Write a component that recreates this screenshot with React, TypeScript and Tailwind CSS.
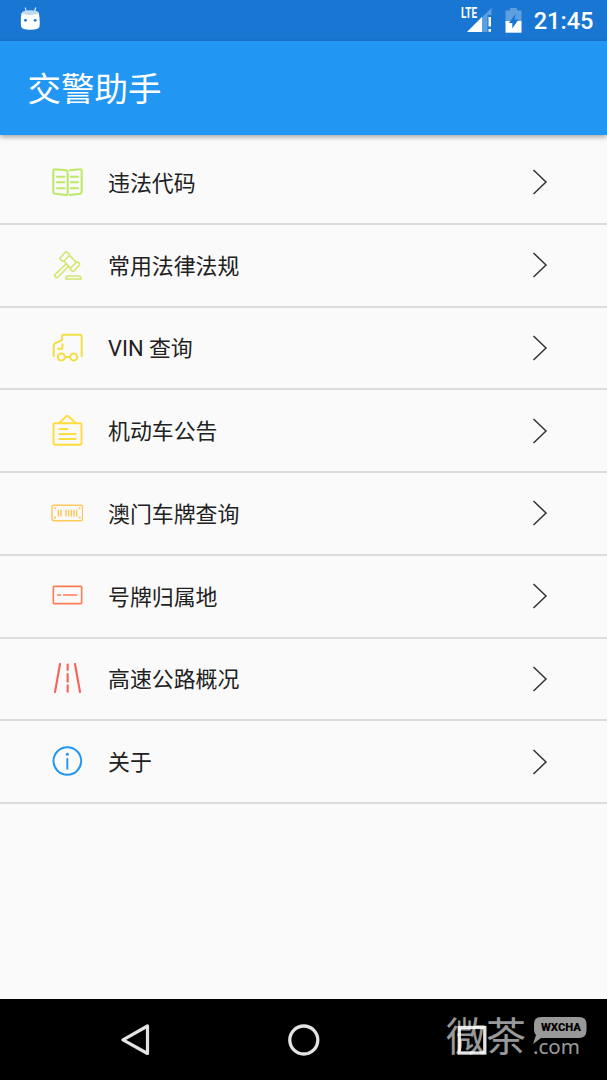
import type { ReactNode } from 'react';

type MenuItem = {
    label: string;
    color: string;
    viewBox: string;
    strokeWidth: number;
    icon: ReactNode;
};

const menuItems: MenuItem[] = [
    {
        label: '违法代码',
        color: 'text-[#bde968]',
        viewBox: '33 33 96 96',
        strokeWidth: 6.2,
        icon: (
            <>
                <path d="M45 43L77 46Q83 47 83 52V115Q83 121 77 120L46 116Q40 115 40 110V48Q40 43 45 43Z" />
                <path d="M90 46L119 43Q125 42 125 48V110Q125 115 120 116L90 120" />
                <path d="M51 65H73M51 82H73M51 100H73M92 65H114M92 82H114M92 100H114" />
            </>
        ),
    },
    {
        label: '常用法律法规',
        color: 'text-[#d5e56b]',
        viewBox: '33 41 96 96',
        strokeWidth: 4.6,
        icon: (
            <>
                <path d="M61 67L76 51Q79 48 82 51L87 56Q90 59 87 62L72 77Q69 79 66 76L61 72Q58 70 61 67Z" />
                <path d="M89 61L108 80M72 78L91 98" />
                <path d="M92 98L109 81Q112 78 115 81L118 84Q120 87 118 90L102 107Q99 110 96 107L92 103Q89 101 92 98Z" />
                <path d="M78 86L45 118Q42 121 45 124L48 126Q51 128 54 125L85 94" />
                <path d="M77 131Q76 122 85 122H115Q123 122 123 131Z" />
            </>
        ),
    },
    {
        label: 'VIN 查询',
        color: 'text-[#f1df45]',
        viewBox: '33 36 96 96',
        strokeWidth: 6,
        icon: (
            <>
                <path d="M41 109V78Q41 73 45 70L66 60V49Q66 44 71 44H119Q125 44 125 50V109" />
                <path d="M67 73V86H54M75 111H90" />
                <circle cx="64" cy="111" r="10.5" />
                <circle cx="101" cy="111" r="10.5" />
            </>
        ),
    },
    {
        label: '机动车公告',
        color: 'text-[#ffdc3e]',
        viewBox: '33 44 96 96',
        strokeWidth: 5.8,
        icon: (
            <>
                <rect x="40.500" y="69" width="84" height="64" rx="4" />
                <path d="M58 68L82 45L107 68M58 86H82M58 101H107M58 116H107" />
            </>
        ),
    },
    {
        label: '澳门车牌查询',
        color: 'text-[#ffc75b]',
        viewBox: '33 36 96 96',
        strokeWidth: 4.4,
        icon: (
            <>
                <rect x="36" y="61" width="92" height="46" rx="6" />
                <path d="M55 76V93M63 76V93M78 76V93M86 76V93M94 76V93M102 76V93M110 76V93" />
                <path d="M45 70V70.100M119 70V70.100M45 98V98.100M119 98V98.100" strokeWidth="6.500" />
            </>
        ),
    },
    {
        label: '号牌归属地',
        color: 'text-[#ff7b54]',
        viewBox: '33 45 96 96',
        strokeWidth: 4.8,
        icon: (
            <>
                <rect x="40" y="64" width="85" height="52" rx="3" />
                <path d="M53 90H61M71 90H110" />
            </>
        ),
    },
    {
        label: '高速公路概况',
        color: 'text-[#f9635a]',
        viewBox: '33 39 96 96',
        strokeWidth: 6.4,
        icon: <path d="M60 42L45 126M105 42L120 126M83 44V60M83 72V95M83 106V125" />,
    },
    {
        label: '关于',
        color: 'text-[#2196f3]',
        viewBox: '33 33 96 96',
        strokeWidth: 5.8,
        icon: (
            <>
                <circle cx="82" cy="78" r="41.500" />
                <path d="M82 72V101" />
                <path d="M82 58V58.100" strokeWidth="9" />
            </>
        ),
    },
];

const StatusBar = () => (
    <div className="flex h-[40.5px] shrink-0 items-start bg-[#1976d2] text-white">
        <svg className="ml-5 mt-1.5 h-6 w-5" viewBox="0 0 20 24" fill="none">
            <path d="M5.300 1.500L6.200 6M15.700 1.500L14.500 6" stroke="#e3effa" strokeWidth="1.200" />
            <path d="M1.500 7H18.800Q20.200 14 19.500 20.500Q19 23.800 10.400 23.800Q1.700 23.800 1.200 20.500Q.3 14 1.500 7Z" fill="#fff" />
            <ellipse cx="10.300" cy="6.600" rx="8.500" ry="2.300" fill="#bfdaf5" />
            <circle cx="5.500" cy="14.300" r="1.400" fill="#1976d2" />
            <circle cx="15.200" cy="14.300" r="1.400" fill="#1976d2" />
        </svg>
        <div className="relative ml-auto mt-1.5 h-[27px] w-[31px]">
            <svg className="h-[27px] w-[31px]" viewBox="0 0 31 27">
                <path d="M30.500 2V9H26.500V26H6Z" fill="#5f9fe0" />
                <path d="M21 11V26H6Z" fill="#fff" />
                <path d="M27.500 11H30V20.500H27.500ZM27.500 23H30V25.700H27.500Z" fill="#fff" />
            </svg>
            <span className="absolute left-0 top-[1px] origin-left scale-x-[0.69] text-[14.5px] font-bold leading-[14px]">LTE</span>
        </div>
        <svg className="ml-[13px] mt-2 h-[25px] w-[17px]" viewBox="0 0 17 25">
            <path d="M5 0H12V2.500H16.500V14H.5V2.500H5Z" fill="#5f9fe0" />
            <path d="M.5 13H16.500V24.700H.5Z" fill="#fff" />
            <path d="M10.800 5.500L3.800 15H7.300V20.500L13.500 11.500H9.500Z" fill="#1976d2" />
        </svg>
        <span className="ml-[11.500px] mr-[13.5px] mt-[7px] text-[23.6px] font-medium leading-[28px]">21:45</span>
    </div>
);

const MenuRow = ({ item }: { item: MenuItem }) => (
    <li className="flex h-[82.75px] items-center border-b-2 border-[#dcdcdc] pl-[51px] pr-[59px]">
        <svg
            className={`h-8 w-8 shrink-0 ${item.color}`}
            viewBox={item.viewBox}
            fill="none"
            stroke="currentColor"
            strokeWidth={item.strokeWidth}
            strokeLinecap="round"
            strokeLinejoin="round"
        >
            {item.icon}
        </svg>
        <span className="ml-[25px] pt-[3px] text-[21.9px] leading-8 text-[#212121]">{item.label}</span>
        <svg className="ml-auto h-[26px] w-4" viewBox="0 0 16 26" fill="none" stroke="#333" strokeWidth="1.500">
            <path d="M1.500 1L14 13L1.500 25" />
        </svg>
    </li>
);

const NavigationBar = () => (
    <div className="relative flex h-[81px] shrink-0 items-center justify-between bg-black pl-[119px] pr-[119px]">
        <svg className="h-8 w-8" viewBox="0 0 32 32" fill="none" stroke="#e4e4e4" strokeWidth="3.200" strokeLinejoin="round">
            <path d="M28.500 2V29.500L4 15.800Z" />
        </svg>
        <svg className="h-8 w-8" viewBox="0 0 32 32" fill="none" stroke="#e4e4e4" strokeWidth="3.300">
            <circle cx="15.800" cy="16" r="14" />
        </svg>
        <svg className="h-8 w-8" viewBox="0 0 32 32" fill="none" stroke="#e4e4e4" strokeWidth="3.300">
            <rect x="3.300" y="3.500" width="25.500" height="25.500" />
        </svg>
        <div className="absolute left-[446px] top-[16px] flex h-[44px] w-[144px] text-white opacity-60">
            <span className="w-[80px] pt-px text-[40px] leading-[44px]">微茶</span>
            <div className="relative ml-[7px] mt-[2px] w-[54px]">
                <svg className="absolute left-0 top-0 h-[27px] w-[54px]" viewBox="0 0 54 27">
                    <path d="M8 0H46Q53.500 0 53.500 7V13Q53.500 21 46 21H8L0 27L3 18Q1 16 1 13V7Q1 0 8 0Z" fill="currentColor" />
                </svg>
                <span className="absolute left-[8px] top-[4px] text-[11.3px] font-black leading-[13px] text-black">WXCHA</span>
                <span className="absolute left-0 top-[17px] font-['Noto_Sans'] text-[20.500px] leading-6">.com</span>
            </div>
        </div>
    </div>
);

const App = () => (
    <div className="flex h-[1080px] w-[607px] flex-col overflow-hidden bg-[#fafafa] font-[Roboto,'Noto_Sans_CJK_SC',sans-serif]">
        <StatusBar />
        <header className="flex h-[94.5px] shrink-0 items-center bg-[#2196f3] pl-[27.5px] pt-[5px] text-white shadow-[0_2px_5px_rgba(0,0,0,0.35)]">
            <h1 className="text-[33.5px] leading-10">交警助手</h1>
        </header>
        <ul className="flex-1 pt-[7px]">
            {menuItems.map(item => (
                <MenuRow key={item.label} item={item} />
            ))}
        </ul>
        <NavigationBar />
    </div>
);

export default App;
